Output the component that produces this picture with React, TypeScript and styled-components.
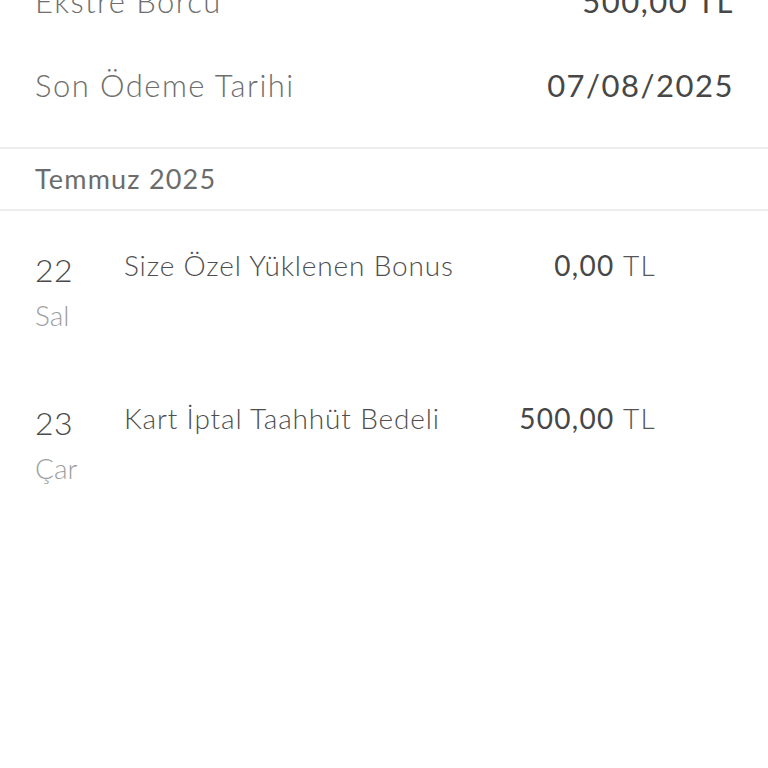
import React from "react";
import styled, { createGlobalStyle } from "styled-components";

const GlobalStyle = createGlobalStyle`
  html, body {
    margin: 0;
    padding: 0;
    background: #ffffff;
  }
  body {
    font-family: Lato, "Open Sans", "Noto Sans", sans-serif;
    overflow: hidden;
  }
`;

type Transaction = {
  day: string;
  weekday: string;
  title: string;
  amount: string;
};

const transactions: Transaction[] = [
  { day: "22", weekday: "Sal", title: "Size Özel Yüklenen Bonus", amount: "0,00" },
  { day: "23", weekday: "Çar", title: "Kart İptal Taahhüt Bedeli", amount: "500,00" },
];

const App = () => {
  return (
    <>
      <GlobalStyle />
      <Page>
        <Summary>
          <SummaryRow>
            <Label>Ekstre Borcu</Label>
            <Value>500,00 TL</Value>
          </SummaryRow>
          <SummaryRow>
            <Label>Son Ödeme Tarihi</Label>
            <Value>07/08/2025</Value>
          </SummaryRow>
        </Summary>
        <MonthHeader>Temmuz 2025</MonthHeader>
        <List>
          {transactions.map((t) => (
            <TxRow key={t.day}>
              <DateCol>
                <Day>{t.day}</Day>
                <Weekday>{t.weekday}</Weekday>
              </DateCol>
              <Title>{t.title}</Title>
              <Amount>
                {t.amount} <Currency>TL</Currency>
              </Amount>
            </TxRow>
          ))}
        </List>
      </Page>
    </>
  );
};

export default App;

const Page = styled.div`
  width: 768px;
  height: 768px;
  background: #fff;
  overflow: hidden;
`;

const Summary = styled.div`
  margin-top: -41px;
  padding: 0 34px 20px 35px;
  border-bottom: 2px solid #ededed;
`;

const SummaryRow = styled.div`
  display: flex;
  justify-content: space-between;
  align-items: center;
  height: 84px;
  line-height: 84px;
  font-size: 31px;
`;

const Label = styled.span`
  color: #6e6e6e;
  font-weight: 300;
  letter-spacing: 1.45px;
`;

const Value = styled.span`
  color: #474747;
  font-weight: 400;
  letter-spacing: 1.5px;
`;

const MonthHeader = styled.div`
  height: 60px;
  line-height: 60px;
  padding: 0 35px;
  font-size: 27px;
  color: #6c6c6c;
  letter-spacing: 1.2px;
  border-bottom: 2px solid #ededed;
`;

const List = styled.div`
  display: flex;
  flex-direction: column;
`;

const TxRow = styled.div`
  display: grid;
  grid-template-columns: 89px 1fr auto;
  align-items: start;
  height: 153px;
  box-sizing: border-box;
  padding: 40px 112px 0 35px;
`;

const DateCol = styled.div`
  display: flex;
  flex-direction: column;
`;

const Day = styled.div`
  font-size: 32px;
  line-height: 38px;
  color: #4a4a4a;
  font-weight: 300;
  letter-spacing: 0.5px;
`;

const Weekday = styled.div`
  margin-top: 7px;
  font-size: 28px;
  line-height: 38px;
  color: #9e9e9e;
  font-weight: 300;
`;

const Title = styled.div`
  font-size: 28px;
  line-height: 28px;
  color: #4e4e4e;
  font-weight: 300;
  letter-spacing: 0.85px;
`;

const Amount = styled.div`
  font-size: 28px;
  line-height: 28px;
  color: #474747;
  text-align: right;
  letter-spacing: 1.3px;
`;

const Currency = styled.span`
  color: #555555;
  font-weight: 300;
`;
